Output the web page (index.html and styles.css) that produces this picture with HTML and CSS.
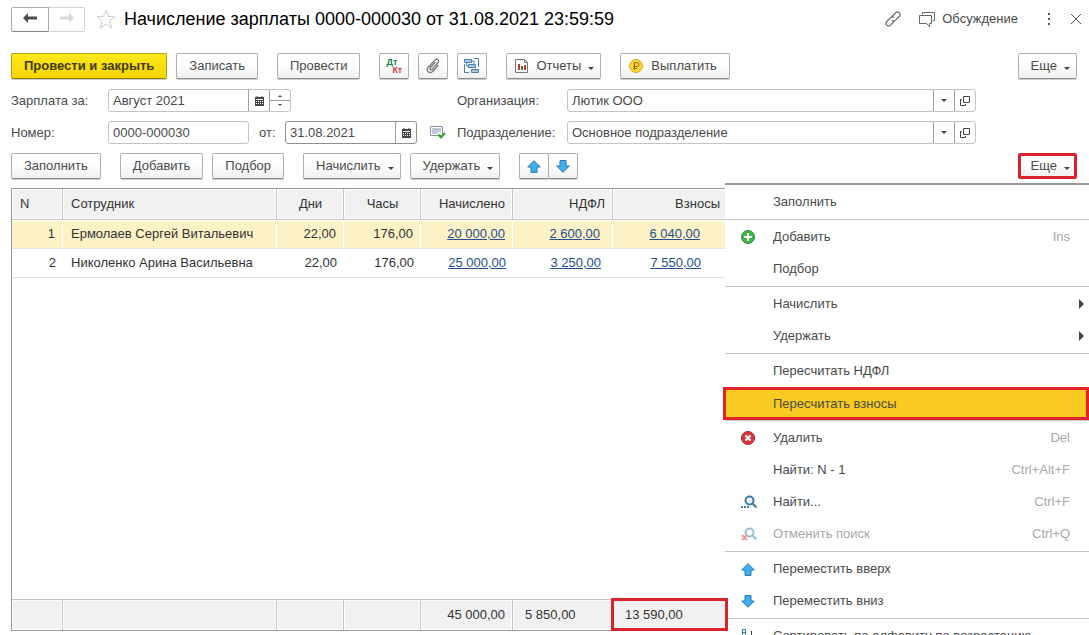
FILE: index.html
```
<!DOCTYPE html>
<html lang="ru">
<head>
    <meta charset="utf-8">
    <title>Начисление зарплаты</title>
    <link rel="stylesheet" href="styles.css">
</head>
<body>
    <!-- shared icons -->
    <svg class="sprite">
        <symbol id="up" viewBox="0 0 14 13"><path d="M7 .7L13.3 7H10v5.4H4V7H.7z" fill="#3fb0ee" stroke="#2c75a5"/></symbol>
        <symbol id="down" viewBox="0 0 14 13"><path d="M7 12.3L.7 6H4V.6h6V6h3.3z" fill="#3fb0ee" stroke="#2c75a5"/></symbol>
        <symbol id="calendar" viewBox="0 0 9 10"><path d="M0 1h9v9H0z" fill="#444"/><path d="M2 0v2M7 0v2" stroke="#444"/><path d="M1 3.500h7" stroke="#fff"/><path d="M1 5.500h7M1 7.500h7" stroke="#fff" stroke-dasharray="1 1"/></symbol>
        <symbol id="open" viewBox="0 0 10 10"><path d="M3.500.5h6v6h-6z" fill="none" stroke="#444"/><path d="M2 3.500H.5v6h5V8" fill="none" stroke="#444"/></symbol>
        <symbol id="lens" viewBox="0 0 16 14"><circle cx="8.500" cy="5.500" r="4" fill="#eef7fc" stroke="#3c7ba6" stroke-width="2"/><path d="M11.500 8.500l4 4" stroke="#3c7ba6" stroke-width="2"/></symbol>
    </svg>

    <header class="title-bar">
        <div class="nav">
            <button aria-label="Назад"><svg width="14" height="10" viewBox="0 0 14 10"><path d="M0 5l5-5v3.500h9v3H5V10z" fill="#4d4d4d"/></svg></button>
            <button class="off" aria-label="Вперед"><svg width="14" height="10" viewBox="0 0 14 10"><path d="M14 5L9 0v3.500H0v3h9V10z" fill="#d9d9d9"/></svg></button>
        </div>
        <svg class="star" width="20" height="20" viewBox="0 0 20 20"><path d="M10 1l2.500 6.500 6.500.2-5.200 4.200L15.600 19 10 15l-5.600 4 1.800-7.100L1 7.700l6.500-.2z" fill="none" stroke="#ccc"/></svg>
        <h1>Начисление зарплаты 0000-000030 от 31.08.2021 23:59:59</h1>
        <div class="tools">
            <button aria-label="Ссылка"><svg width="16" height="16" viewBox="0 0 16 16" fill="none" stroke="#666" stroke-width="1.200"><path d="M6.500 6L10.500 1.800a2.500 2.500 0 0 1 3.700 3.700L10.500 9.200a2.500 2.500 0 0 1-3.500 0M9.500 10L5.500 14.200a2.500 2.500 0 0 1-3.700-3.700L5.500 6.800a2.500 2.500 0 0 1 3.500 0"/></svg></button>
            <button class="discuss"><svg width="16" height="16" viewBox="0 0 16 16" fill="none" stroke="#666"><path d="M3.500 3.500v-2h12v8h-2M.5 4.500h12v8h-2v3l-3-3h-7z"/></svg>Обсуждение</button>
            <button class="dots" aria-label="Меню"><svg width="4" height="12" viewBox="0 0 4 12" fill="#555"><path d="M1 0h2v2H1zM1 5h2v2H1zM1 10h2v2H1z"/></svg></button>
            <button aria-label="Закрыть"><svg width="10" height="10" viewBox="0 0 10 10"><path d="M0 0l10 10M10 0L0 10" stroke="#555"/></svg></button>
        </div>
    </header>

    <div class="bar">
        <button class="btn primary">Провести и закрыть</button>
        <button class="btn">Записать</button>
        <button class="btn start">Провести</button>
        <button class="btn icon start" aria-label="Дт Кт"><span class="dt">Дт</span><span class="kt">Кт</span></button>
        <button class="btn icon" aria-label="Файлы"><svg width="14" height="16" viewBox="0 0 14 16" fill="none" stroke="#777" stroke-width="1.300"><path d="M9.500 4L4.300 9.800c-1 1.200.7 2.800 1.800 1.600l5.800-6.600c2-2.300-1-5-3.100-2.700L2.300 9.200c-3 3.500 1.500 7.500 4.500 4.100L12.500 7"/></svg></button>
        <button class="btn icon" aria-label="Структура"><svg width="16" height="16" viewBox="0 0 16 16" fill="#a9cbe2" stroke="#4d80a8"><path d="M.5 1.500h7v3h-7zM4.500 6.500h7v3h-7zM7.500 11.500h7v3h-7z"/><path d="M10 .5h4.500V9M.5 6v8.500H5M8 3h2v3M2.500 5v3h2" fill="none"/></svg></button>
        <button class="btn start"><svg class="lead" width="13" height="14" viewBox="0 0 13 14"><path d="M.5.5h9l3 3v10H.5z" fill="#fff" stroke="#777"/><path d="M9.500.5v3h3" fill="none" stroke="#777"/><path d="M3 5h2v6H3z" fill="#c33"/><path d="M6 7h2v4H6z" fill="#2a8a3a"/><path d="M9 6h2v5H9z" fill="#c33"/></svg>Отчеты<i class="caret"></i></button>
        <button class="btn start pay"><svg class="lead" width="14" height="14" viewBox="0 0 14 14"><circle cx="7" cy="7" r="6.500" fill="#fcd535" stroke="#dba91c"/><path d="M5.500 11V3.500H8a2 2 0 0 1 0 4H4M4 9.500h4" fill="none" stroke="#a06a10"/></svg>Выплатить</button>
        <button class="btn right">Еще<i class="caret"></i></button>
    </div>

    <form class="fields">
        <label for="period">Зарплата за:</label>
        <div class="line">
            <div class="field period">
                <input id="period" value="Август 2021">
                <button type="button" aria-label="Выбрать месяц"><svg width="9" height="10"><use href="#calendar"/></svg></button>
                <button type="button" class="spin" aria-label="Изменить месяц"><i class="caret small flip"></i><i class="caret small"></i></button>
            </div>
        </div>
        <label for="org">Организация:</label>
        <div class="field">
            <input id="org" value="Лютик ООО">
            <button type="button" aria-label="Список"><i class="caret"></i></button>
            <button type="button" aria-label="Открыть"><svg width="10" height="10"><use href="#open"/></svg></button>
        </div>

        <label for="number">Номер:</label>
        <div class="line">
            <div class="field number"><input id="number" value="0000-000030"></div>
            <label class="from" for="date">от:</label>
            <div class="field date">
                <input id="date" value="31.08.2021">
                <button type="button" aria-label="Выбрать дату"><svg width="9" height="10"><use href="#calendar"/></svg></button>
            </div>
            <svg class="state" width="16" height="13" viewBox="0 0 16 13"><path d="M.5.500h12v9H.5z" fill="#fff" stroke="#8295a8"/><path d="M2 3h9M2 5h9M2 7h6" stroke="#8295a8"/><path d="M8.500 8.500l2.500 3L15 7" fill="none" stroke="#2aa838" stroke-width="2"/></svg>
        </div>
        <label for="dept">Подразделение:</label>
        <div class="field">
            <input id="dept" value="Основное подразделение">
            <button type="button" aria-label="Список"><i class="caret"></i></button>
            <button type="button" aria-label="Открыть"><svg width="10" height="10"><use href="#open"/></svg></button>
        </div>
    </form>

    <div class="bar">
        <button class="btn">Заполнить</button>
        <button class="btn start">Добавить</button>
        <button class="btn">Подбор</button>
        <button class="btn start">Начислить<i class="caret"></i></button>
        <button class="btn">Удержать<i class="caret"></i></button>
        <div class="pair start">
            <button class="btn icon" aria-label="Вверх"><svg width="14" height="13"><use href="#up"/></svg></button>
            <button class="btn icon" aria-label="Вниз"><svg width="14" height="13"><use href="#down"/></svg></button>
        </div>
        <div class="more right">
            <button class="btn marked">Еще<i class="caret"></i></button>
            <div class="menu">
                <div class="group">
                    <button>Заполнить</button>
                </div>
                <div class="group">
                    <button><svg width="14" height="14" viewBox="0 0 14 14"><circle cx="7" cy="7" r="6.500" fill="#43b649" stroke="#278a35"/><path d="M7 3v8M3 7h8" stroke="#fff" stroke-width="2"/></svg>Добавить<kbd>Ins</kbd></button>
                    <button>Подбор</button>
                </div>
                <div class="group">
                    <button>Начислить<i class="sub"></i></button>
                    <button>Удержать<i class="sub"></i></button>
                </div>
                <div class="group">
                    <button>Пересчитать НДФЛ</button>
                    <button class="current">Пересчитать взносы</button>
                </div>
                <div class="group">
                    <button><svg width="14" height="14" viewBox="0 0 14 14"><circle cx="7" cy="7" r="6.500" fill="#d9363c" stroke="#a8222c"/><path d="M4.500 4.500l5 5M9.500 4.500l-5 5" stroke="#fff" stroke-width="2"/></svg>Удалить<kbd>Del</kbd></button>
                    <button>Найти: N - 1<kbd>Ctrl+Alt+F</kbd></button>
                    <button><svg width="16" height="14" viewBox="0 0 16 14"><use href="#lens"/><path d="M0 12h8" stroke="#3c7ba6" stroke-width="2" stroke-dasharray="2 1"/></svg>Найти...<kbd>Ctrl+F</kbd></button>
                    <button disabled><svg width="16" height="14" viewBox="0 0 16 14" opacity=".5"><use href="#lens"/><path d="M1 8l5 5M6 8l-5 5" stroke="#d9363c" stroke-width="2"/></svg>Отменить поиск<kbd>Ctrl+Q</kbd></button>
                </div>
                <div class="group">
                    <button><svg width="14" height="13"><use href="#up"/></svg>Переместить вверх</button>
                    <button><svg width="14" height="13"><use href="#down"/></svg>Переместить вниз</button>
                </div>
                <div class="group">
                    <button><svg width="14" height="16" viewBox="0 0 14 16" fill="none"><path d="M1.500 8V1.500h3V8M1.500 4.500h3M1.500 10.500h3l-3 5h3" stroke="#2d7db8"/><path d="M10.500 3v11M8 11.500l2.500 3 2.500-3" stroke="#444"/></svg>Сортировать по алфавиту по возрастанию</button>
                </div>
            </div>
        </div>
    </div>

    <div class="grid">
        <table>
            <colgroup>
                <col class="c-n"><col class="c-name"><col class="c-days"><col class="c-hours"><col class="c-sum"><col class="c-tax"><col class="c-fee"><col>
            </colgroup>
            <thead>
                <tr><th>N</th><th>Сотрудник</th><th class="mid">Дни</th><th class="mid">Часы</th><th class="num">Начислено</th><th class="num">НДФЛ</th><th class="num">Взносы</th><th></th></tr>
            </thead>
            <tbody>
                <tr class="active"><td class="num">1</td><td>Ермолаев Сергей Витальевич</td><td class="num">22,00</td><td class="num">176,00</td><td class="num"><a href="#">20 000,00</a></td><td class="num tax"><a href="#">2 600,00</a></td><td class="num fee"><a href="#">6 040,00</a></td><td></td></tr>
                <tr><td class="num">2</td><td>Николенко Арина Васильевна</td><td class="num">22,00</td><td class="num">176,00</td><td class="num"><a href="#">25 000,00</a></td><td class="num tax"><a href="#">3 250,00</a></td><td class="num fee"><a href="#">7 550,00</a></td><td></td></tr>
                <tr class="rest"><td colspan="8"></td></tr>
            </tbody>
            <tfoot>
                <tr><td></td><td></td><td></td><td></td><td class="num">45 000,00</td><td class="total">5 850,00</td><td class="total marked-cell">13 590,00</td><td></td></tr>
            </tfoot>
        </table>
    </div>
</body>
</html>
```

FILE: styles.css
```
* {
    box-sizing: border-box;
}

body {
    margin: 0;
    padding: 7px 12px 4px 11px;
    height: 100vh;
    overflow: hidden;
    display: flex;
    flex-direction: column;
    background: #fff;
    color: #4a4a4a;
    font: 13px/16px "Liberation Sans", Arial, sans-serif;
}

button,
input {
    font: inherit;
    color: inherit;
}

button {
    padding: 0;
    border: 0;
    background: none;
}

svg {
    flex: none;
}

.sprite {
    position: absolute;
    width: 0;
    height: 0;
}

/* title */
.title-bar {
    display: flex;
    align-items: center;
    height: 24px;
    margin-bottom: 22px;
}

.nav {
    display: flex;
}

.nav button {
    width: 38px;
    height: 25px;
    border: 1px solid #aaa;
    border-bottom-color: #888;
    border-radius: 2px 0 0 2px;
}

.nav .off {
    width: 36px;
    border-color: #d4d4d4;
    border-left: 0;
    border-radius: 0 2px 2px 0;
}

.star {
    margin: 0 8px 0 11px;
}

h1 {
    margin: 0;
    color: #000;
    font-size: 18px;
    line-height: 24px;
    font-weight: normal;
    white-space: nowrap;
}

.tools {
    display: flex;
    align-items: center;
    gap: 18px;
    margin-left: auto;
    margin-right: -4px;
}

.tools button {
    display: flex;
    align-items: center;
}

.discuss {
    gap: 7px;
}

.dots {
    margin: 0 2px 0 11px;
}

/* command bars */
.bar {
    display: flex;
    gap: 9px;
    height: 26px;
}

.btn {
    display: flex;
    align-items: center;
    justify-content: center;
    height: 26px;
    padding: 0 12px;
    border: 1px solid #b0b0b0;
    border-bottom-color: #8c8c8c;
    border-radius: 2px;
    background: linear-gradient(#fff 40%, #f0f0f0);
    box-shadow: 0 1px 0 #ccc;
    white-space: nowrap;
}

.btn .caret {
    margin: 4px -6px 0 7px;
}

.start {
    margin-left: 10px;
}

.right {
    margin-left: auto;
}

.primary {
    border-color: #b5a014;
    border-bottom-color: #8f7d10;
    background: linear-gradient(#ffe81c, #f5d500);
    color: #3f3a10;
    font-weight: bold;
}

.icon {
    width: 30px;
    padding: 0;
}

.lead {
    margin: 0 8px 0 -4px;
}

.dt,
.kt {
    font-size: 9px;
    line-height: 9px;
    font-weight: bold;
}

.dt {
    margin: -7px -5px 0 0;
    color: #16804a;
}

.kt {
    margin-top: 8px;
    color: #cf4040;
}

.pair {
    display: flex;
}

.pair .btn + .btn {
    margin-left: -1px;
}

.caret {
    width: 0;
    height: 0;
    border: 3px solid transparent;
    border-top-color: #444;
    border-bottom: 0;
}

.small {
    border-width: 2px;
    border-bottom: 0;
}

.flip {
    transform: rotate(180deg);
}

/* document fields */
.fields {
    display: grid;
    grid-template-columns: 97px 349px 110px 1fr;
    row-gap: 9px;
    align-items: center;
    margin: 10px 101px 9px 0;
}

.line,
.field {
    display: flex;
    align-items: center;
}

.field {
    height: 23px;
    border: 1px solid #c4c4c4;
    border-radius: 3px;
}

.field input {
    flex: 1;
    width: 0;
    height: 21px;
    padding: 0 4px;
    border: 0;
    background: none;
    outline: 0;
}

.field button {
    display: flex;
    align-items: center;
    justify-content: center;
    width: 21px;
    height: 21px;
    border-left: 1px solid #a0a0a0;
}

.period {
    width: 183px;
}

.field .spin {
    flex-direction: column;
    gap: 7px;
    background: linear-gradient(#a0a0a0, #a0a0a0) center / 100% 1px no-repeat;
}

.number {
    width: 141px;
}

.from {
    width: 36px;
    padding-left: 10px;
}

.date {
    width: 132px;
    border-color: #909090;
}

.state {
    margin-left: 13px;
}

/* drop-down menu */
.more {
    position: relative;
}

.marked {
    border: 3px solid #d9232b;
    padding: 0 10px;
    box-shadow: none;
}

.menu {
    position: absolute;
    z-index: 2;
    top: 30px;
    right: -12px;
    width: 364px;
    border-top: 2px solid #999;
    background: #fff;
}

.group {
    padding: 1px 0;
    border-bottom: 1px solid #c6c6c6;
}

.menu button {
    position: relative;
    display: flex;
    align-items: center;
    width: 100%;
    height: 32px;
    padding: 0 19px 0 48px;
    white-space: nowrap;
}

.menu button svg {
    position: absolute;
    left: 16px;
}

.menu kbd {
    margin-left: auto;
    color: #a8a8a8;
    font: inherit;
}

.menu button:disabled {
    color: #a8a8a8;
}

.sub {
    margin: 0 -14px 0 auto;
    border: 5px solid transparent;
    border-left-color: #444;
    border-right: 0;
}

.menu .current {
    width: 366px;
    height: 33px;
    margin: 0 0 -1px -2px;
    padding-left: 47px;
    border: 3px solid #e0222a;
    background: #f9cb20;
}

/* employees */
.grid {
    flex: 1;
    min-height: 0;
    margin-top: 9px;
    border: 1px solid #999;
    color: #333;
}

table {
    width: 100%;
    height: 100%;
    table-layout: fixed;
    border-spacing: 0;
}

.c-n { width: 51px; }
.c-name { width: 214px; }
.c-days { width: 67px; }
.c-hours { width: 77px; }
.c-sum { width: 92px; }
.c-tax { width: 100px; }
.c-fee { width: 115px; }

th,
td {
    height: 29px;
    padding: 0 7px 0 8px;
    border-bottom: 1px solid #e2e2e2;
    text-align: left;
    font-weight: normal;
    white-space: nowrap;
}

th,
tfoot td {
    border-right: 1px solid #c4c4c4;
    background: #f1f1f1;
    box-shadow: inset 0 0 0 1px #fff;
}

th {
    height: 31px;
    border-bottom-color: #c4c4c4;
}

tfoot td {
    height: 31px;
    border-top: 1px solid #c4c4c4;
    border-bottom: 0;
}

.active td {
    border-right: 1px solid #fff;
    background: #fdf1c6;
    box-shadow: inset 0 1px 0 #fff;
}

.rest td {
    height: 100%;
    border: 0;
}

.mid {
    text-align: center;
}

.num {
    text-align: right;
}

.tax {
    padding-right: 12px;
}

.fee {
    padding-right: 27px;
}

.total {
    padding-left: 12px;
}

.marked-cell {
    position: relative;
}

/* the frame goes over the open menu */
.marked-cell::after {
    content: "";
    position: absolute;
    z-index: 3;
    inset: -2px -1px -1px -2px;
    border: 3px solid #d9232b;
}

a {
    color: #234f92;
}
```
